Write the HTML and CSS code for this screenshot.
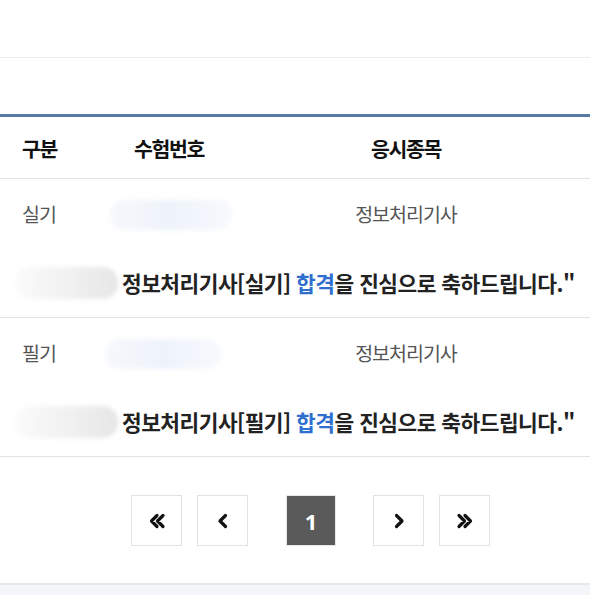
FILE: index.html
```html
<!DOCTYPE html>
<html lang="ko">
<head>
<meta charset="utf-8">
<link rel="stylesheet" href="styles.css">
</head>
<body>
<div class="page">
  <div class="top-band"></div>
  <div class="gap-band"></div>
  <div class="table">
    <div class="row head">
      <div class="c1">구분</div>
      <div class="c2">수험번호</div>
      <div class="c3">응시종목</div>
    </div>
    <div class="entry">
      <div class="row body">
        <div class="c1">실기</div>
        <div class="c2"><span class="blob blue b1"></span></div>
        <div class="c3">정보처리기사</div>
      </div>
      <div class="msg"><span class="blob gray"></span><span class="msg-text">정보처리기사[실기] <em>합격</em>을 진심으로 축하드립니다."</span></div>
    </div>
    <div class="entry">
      <div class="row body">
        <div class="c1">필기</div>
        <div class="c2"><span class="blob blue b2"></span></div>
        <div class="c3">정보처리기사</div>
      </div>
      <div class="msg"><span class="blob gray"></span><span class="msg-text">정보처리기사[필기] <em>합격</em>을 진심으로 축하드립니다."</span></div>
    </div>
  </div>
  <div class="pager">
    <a class="pg"><svg viewBox="0 0 20 20" width="20" height="20"><path d="M10 4.5 L4.5 10 L10 15.5 M16 4.5 L10.5 10 L16 15.5" fill="none" stroke="#111" stroke-width="3.2" stroke-linecap="round" stroke-linejoin="round"/></svg></a>
    <a class="pg"><svg viewBox="0 0 20 20" width="20" height="20"><path d="M12.5 4.5 L7 10 L12.5 15.5" fill="none" stroke="#111" stroke-width="3.2" stroke-linecap="round" stroke-linejoin="round"/></svg></a>
    <a class="pg current">1</a>
    <a class="pg"><svg viewBox="0 0 20 20" width="20" height="20"><path d="M7.5 4.5 L13 10 L7.5 15.5" fill="none" stroke="#111" stroke-width="3.2" stroke-linecap="round" stroke-linejoin="round"/></svg></a>
    <a class="pg"><svg viewBox="0 0 20 20" width="20" height="20"><path d="M4 4.5 L9.5 10 L4 15.5 M10 4.5 L15.5 10 L10 15.5" fill="none" stroke="#111" stroke-width="3.2" stroke-linecap="round" stroke-linejoin="round"/></svg></a>
  </div>
  <div class="footer-band"></div>
</div>
</body>
</html>
```
FILE: styles.css
```css
* { box-sizing: border-box; }
html, body { margin: 0; padding: 0; background: #fff; }
body { font-family: "Noto Sans CJK KR", "Noto Sans", sans-serif; overflow: hidden; }
.page { width: 590px; }
.top-band { height: 58px; border-bottom: 1px solid #ececec; }
.gap-band { height: 56px; }
.table { border-top: 3px solid #5a7aa3; }
.row { display: grid; grid-template-columns: 76px 186px 288px 1fr; align-items: center; }
.row .c1 { padding-left: 22px; }
.row .c2, .row .c3 { text-align: center; }
.head { height: 62px; border-bottom: 1px solid #e3e3e3; font-weight: 700; font-size: 20.5px; color: #111; letter-spacing: -1.4px; }
.entry { border-bottom: 1px solid #e3e3e3; }
.body { height: 69px; font-size: 19.5px; color: #555; letter-spacing: -1px; }
.blob { display: inline-block; vertical-align: middle; border-radius: 15px; filter: blur(2px); }
.blue { height: 30px; background: linear-gradient(90deg, #f6f8fc 0%, #eef3fb 50%, #f7f9fd 100%); }
.b1 { width: 122px; margin-left: 4px; }
.b2 { width: 117px; margin-left: -11px; }
.gray { width: 103px; height: 32px; background: linear-gradient(90deg, #fbfbfb 0%, #efefef 60%, #e6e6e6 100%); margin-right: 4px; }
.msg { height: 69px; display: flex; align-items: center; padding-left: 15px; }
.msg-text { font-weight: 700; font-size: 21.4px; color: #222; letter-spacing: -0.5px; white-space: nowrap; }
.msg-text em { font-style: normal; color: #2f6fd0; }
.pager { height: 126px; display: flex; align-items: flex-start; padding-top: 38px; padding-left: 131px; }
.pg { width: 51px; height: 51px; border: 1px solid #e2e2e2; display: flex; align-items: center; justify-content: center; background: #fff; margin-right: 15px; }
.pg:nth-child(2) { margin-right: 38px; }
.pg.current { background: #5a5a5a; border-color: #e8e8e8; color: #fff; font-family: "Open Sans", sans-serif; font-weight: 700; font-size: 22px; width: 50px; margin-right: 37px; }
.footer-band { height: 20px; border-top: 2px solid #e6e8ee; background: #f4f5f9; }
```
